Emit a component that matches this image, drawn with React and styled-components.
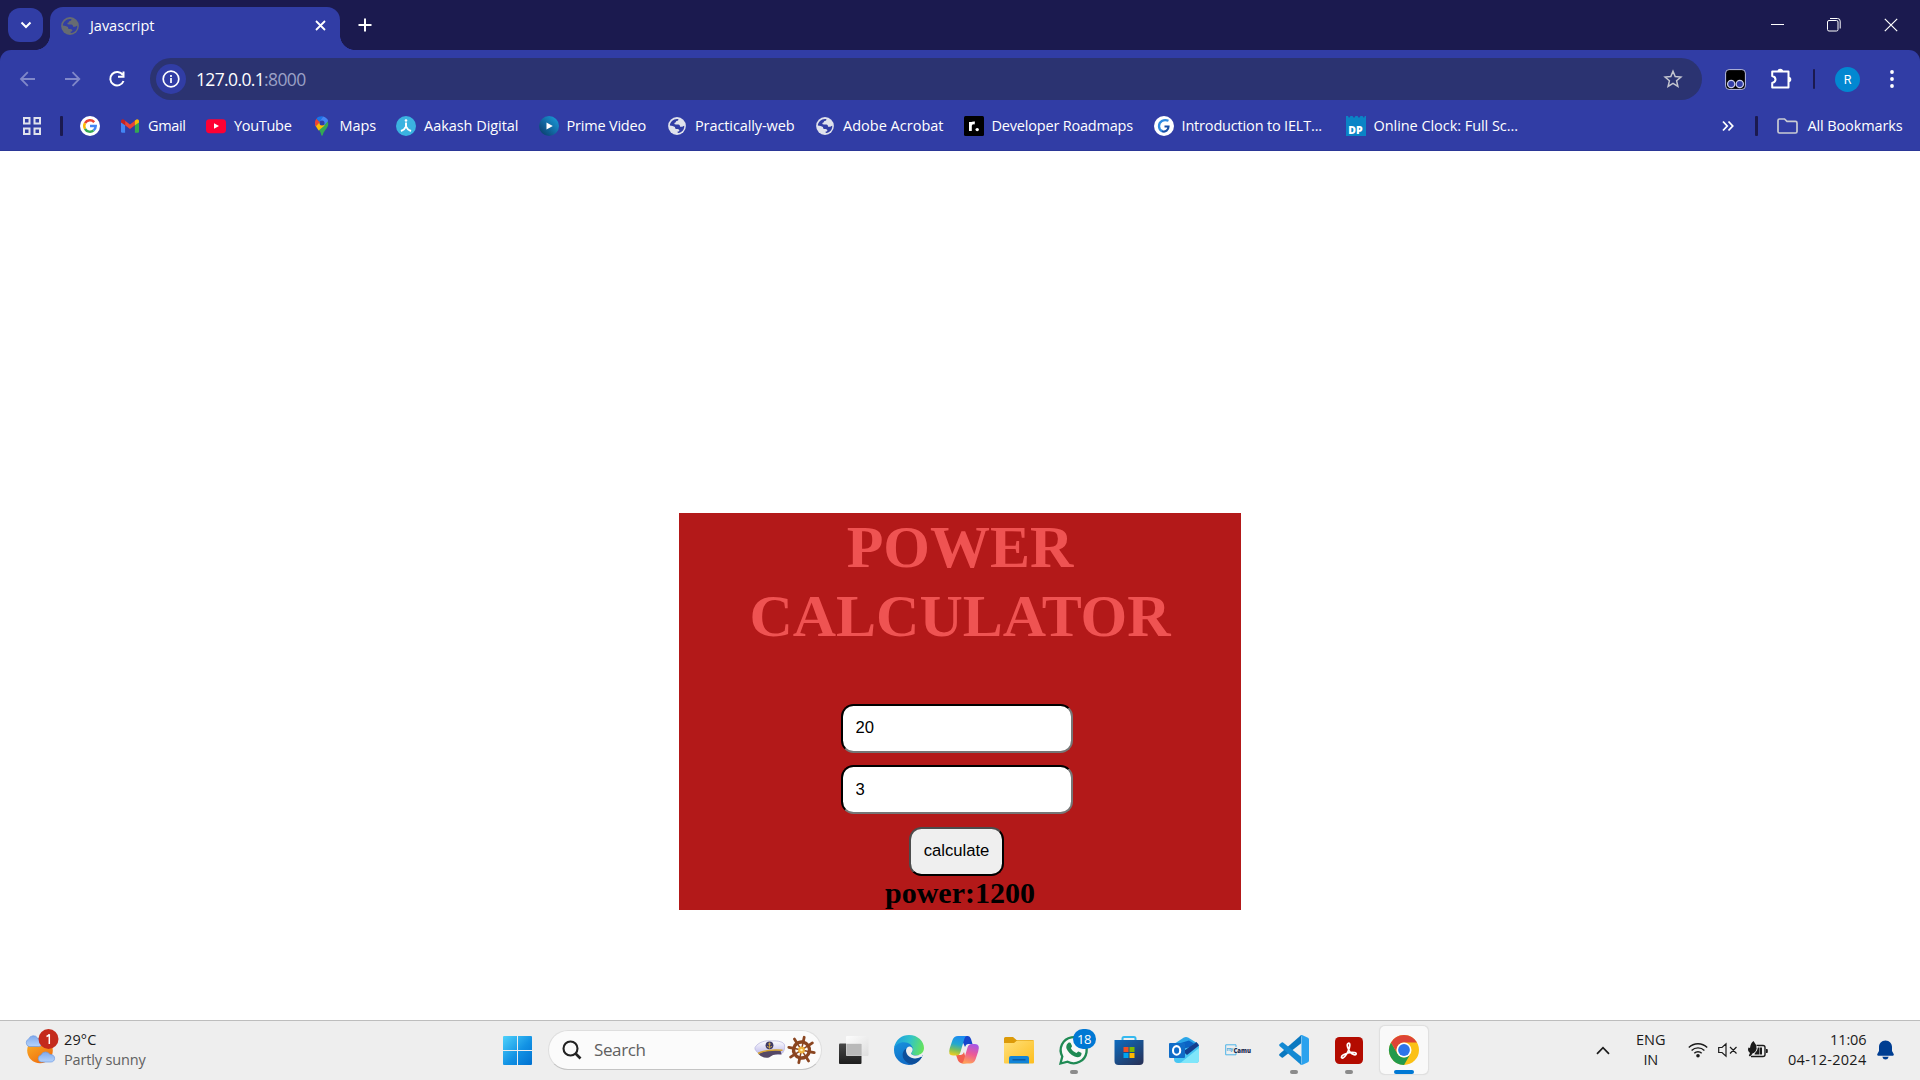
import React, { useLayoutEffect, useRef, useState } from "react";
import styled, { createGlobalStyle } from "styled-components";

const C = { strip: "#1b1a4f", bar: "#313da5", omni: "#2b3371", light: "#e0e2ec" };

const GlobalStyle = createGlobalStyle`
  * { box-sizing: border-box; }
  body { margin: 0; background: #fff; overflow: hidden; }
`;

const Screen = styled.div`
  width: 1920px;
  height: 1080px;
  display: flex;
  flex-direction: column;
  font-family: "Open Sans", "Noto Sans", sans-serif;
  background: #fff;
`;

const Label = styled.span`
  display: block;
  flex: none;
  white-space: nowrap;
  width: ${(p) => p.$w}px;
  font-size: ${(p) => p.$size || 14.5}px;
  line-height: 20px;
  color: ${(p) => p.$color || "#fff"};
`;

/* Spreads the letters so that the label takes exactly w pixels. */
function FitText({ w, children, ...rest }) {
  const ref = useRef(null);
  const [spacing, setSpacing] = useState(0);
  useLayoutEffect(() => {
    const natural = ref.current.getBoundingClientRect().width;
    setSpacing((w + 0.5 - natural) / ref.current.textContent.length);
  }, [w]);
  return (
    <Label $w={w} {...rest}>
      <span ref={ref} style={{ letterSpacing: `${spacing}px` }}>{children}</span>
    </Label>
  );
}

const Svg = styled.svg`
  display: block;
  flex: none;
  overflow: visible;
`;

const Spacer = styled.div`
  flex: 1;
`;

/* ---------- browser chrome ---------- */
const TabStrip = styled.div`
  height: 50px;
  flex: none;
  background: ${C.strip};
  display: flex;
  align-items: flex-start;
  padding-left: 8px;
`;
const TabSearch = styled.div`
  width: 35px;
  height: 34px;
  margin: 8px 7px 0 0;
  border-radius: 12px;
  background: ${C.bar};
  display: grid;
  place-items: center;
`;
const Tab = styled.div`
  position: relative;
  width: 290px;
  height: 43px;
  margin-top: 7px;
  padding: 0 14.5px 6px 11px;
  border-radius: 13px 13px 0 0;
  background: ${C.bar};
  display: flex;
  align-items: center;
  gap: 11px;
  &::before, &::after {
    content: "";
    position: absolute;
    bottom: 0;
    width: 15px;
    height: 15px;
  }
  &::before {
    left: -15px;
    background: radial-gradient(circle at 0 0, transparent 14.6px, ${C.bar} 15.2px);
  }
  &::after {
    right: -15px;
    background: radial-gradient(circle at 100% 0, transparent 14.6px, ${C.bar} 15.2px);
  }
`;
const NewTab = styled.div`
  margin: 18px 0 0 18px;
`;
const WindowControls = styled.div`
  display: flex;
  height: 50px;
  align-items: center;
  gap: 43px;
  padding-right: 22px;
`;
const ToolbarBack = styled.div`
  flex: none;
  height: 101px;
  background: ${C.strip};
`;
const Bars = styled.div`
  height: 101px;
  background: ${C.bar};
  border-radius: 11px 11px 0 0;
  border-bottom: 1px solid #2b3797;
`;
const Toolbar = styled.div`
  height: 58px;
  display: flex;
  align-items: center;
  padding-left: 18px;
`;
const Nav = styled.div`
  display: flex;
  gap: 24.5px;
  width: 132px;
`;
const Omnibox = styled.div`
  width: 1552px;
  height: 42px;
  border-radius: 21px;
  background: ${C.omni};
  display: flex;
  align-items: center;
  padding: 0 19.5px 0 6px;
`;
const InfoDisc = styled.div`
  width: 30px;
  height: 30px;
  border-radius: 50%;
  background: ${C.bar};
  display: grid;
  place-items: center;
  margin-right: 10px;
`;
const Port = styled.span`
  color: #9ba1c6;
`;
const Divider = styled.div`
  flex: none;
  width: ${(p) => p.$w || 2}px;
  height: 20px;
  border-radius: 1px;
  background: ${C.strip};
  margin: 0 ${(p) => p.$r}px 0 ${(p) => p.$l}px;
`;
const Actions = styled.div`
  display: flex;
  align-items: center;
  padding-left: 23px;
`;
const Avatar = styled.div`
  width: 25px;
  height: 25px;
  border-radius: 50%;
  background: #0288d1;
  color: #fff;
  font: 12.5px/25px Roboto, sans-serif;
  text-align: center;
  margin-right: 30px;
`;
const BookmarkBar = styled.div`
  height: 35px;
  display: flex;
  align-items: center;
  padding: 0 18px 0 22px;
`;
const Bookmarks = styled.div`
  display: flex;
  gap: 21px;
`;
const Bookmark = styled.div`
  display: flex;
  align-items: center;
  gap: 8px;
  margin-left: ${(p) => p.$shift || 0}px;
`;

/* ---------- page ---------- */
const Page = styled.main`
  flex: 1;
  display: flex;
  flex-direction: column;
  align-items: center;
  padding-top: 362px;
`;
const Card = styled.section`
  width: 562px;
  height: 397px;
  background: #b31919;
  display: flex;
  flex-direction: column;
  align-items: center;
`;
const Title = styled.h1`
  margin: 0 0 53px;
  width: 500px;
  font: bold 60px/69px "Liberation Serif", serif;
  text-align: center;
  color: #ef5352;
`;
const Field = styled.input`
  display: block;
  width: 232px;
  height: 49px;
  margin: 0 6px 12px 0;
  padding: 0 12.5px ${(p) => (p.$low ? 0 : 1.5)}px;
  border: 2px inset #767676;
  border-color: #212121 #767676 #767676 #212121;
  border-radius: 12.5px;
  background: #fff;
  color: #000;
  outline: none;
  font: 16.67px "Liberation Sans", sans-serif;
`;
const Calculate = styled.button`
  width: 95px;
  height: 49px;
  margin: 1px 7px 0 0;
  padding: 0 0 2px;
  border: 2px solid;
  border-color: #4c4c4c #000 #000 #4c4c4c;
  border-radius: 12.5px;
  background: #efefef;
  color: #000;
  font: 16.67px "Liberation Sans", sans-serif;
`;
const Result = styled.h2`
  margin: 0;
  font: bold 30px/34px "Liberation Serif", serif;
  color: #000;
`;

/* ---------- taskbar ---------- */
const Taskbar = styled.footer`
  height: 60px;
  flex: none;
  background: #eee;
  border-top: 1px solid #bdbdbd;
  display: flex;
  align-items: center;
  padding: 0 26px 1px 24px;
`;
const Weather = styled.div`
  width: 479px;
  display: flex;
  gap: 8px;
  align-items: center;
`;
const Lines = styled.div`
  display: flex;
  flex-direction: column;
  align-items: ${(p) => p.$align || "flex-start"};
`;
const SearchBox = styled.div`
  width: 274px;
  height: 40px;
  margin: 0 4px 0 16px;
  border-radius: 20px;
  background: #fbfbfb;
  border: 1px solid #dedede;
  border-bottom-color: #c4c4c4;
  display: flex;
  align-items: center;
  padding: 0 5px 0 13px;
`;
const Tile = styled.div`
  position: relative;
  width: 55px;
  height: 48px;
  display: grid;
  place-items: center;
`;
const ActiveTile = styled.div`
  width: 48px;
  height: 48px;
  border-radius: 5px;
  background: #f9f9f9;
  box-shadow: 0 0 1px 0.5px #dedede;
  display: grid;
  place-items: center;
`;
const RunMark = styled.div`
  position: absolute;
  bottom: 0;
  left: ${(p) => (p.$on ? 17.5 : 23.5)}px;
  width: ${(p) => (p.$on ? 20 : 8)}px;
  height: 4px;
  border-radius: 2px;
  background: ${(p) => (p.$on ? "#0078d4" : "#8a8a8a")};
`;
const Count = styled.div`
  position: absolute;
  left: 26.5px;
  top: 3px;
  width: 23px;
  height: 20px;
  border-radius: 10px;
  background: #0078d4;
  color: #fff;
  font-size: 13px;
  line-height: 20px;
  letter-spacing: -0.5px;
  text-align: center;
`;
const Tray = styled.div`
  display: flex;
  align-items: center;
`;
const Gap = styled.div`
  flex: none;
  width: ${(p) => p.$w}px;
`;

/* ---------- icons ---------- */
const Globe = ({ color, size = 18 }) => (
  <Svg width={size} height={size} viewBox={size === 20 ? "-1 -1 20 20" : "0 0 18 18"}>
    <circle cx="9" cy="9" r="8.9" fill={color} />
    <path fill={C.bar} d="M1.800 8.400C2.200 4.800 5 2 9 1.900h1.300c.3 1-.2 1.700-1.100 1.900-.9.200-1.300.6-1.300 1.400-.9.200-1.500.5-1.500 1.400 0 .7.500.8 1.200.8h2.700c1.300.2 1.800 1.200 1.700 2.400h1.700c1.100-.1 1.500-1 2.600-1.100.1 3.900-2.400 6.900-6 7.400-.7-.2-.8-.9-.6-1.700h.8c1-.3 1.200-1.500.3-2-.6-.3-1.700-.2-2.600-.3-1.200-.2-1.100-1.200-1.300-2C5.700 9 3.700 8.600 1.800 8.400z" />
  </Svg>
);
const Arrow = ({ flip }) => (
  <Svg width="20" height="20" viewBox="0 0 20 20" fill="none" stroke="#8088c9" strokeWidth="1.8">
    <path d={flip ? "M2 10H16M9.500 3.200L16.300 10L9.500 16.800" : "M17 10H3M9.800 3.200L3 10L9.800 16.800"} />
  </Svg>
);
const GoogleG = () => (
  <Svg width="20" height="20" viewBox="0 0 20 20" fill="none" strokeWidth="2.500">
    <circle cx="10" cy="10" r="10" fill="#fff" />
    <path stroke="#ea4335" d="M14.200 6.200A5.700 5.700 0 0 0 5 7.200" />
    <path stroke="#fbbc05" d="M5 7.200a5.700 5.700 0 0 0 0 5.600" />
    <path stroke="#34a853" d="M5 12.800a5.700 5.700 0 0 0 8.600 1.600" />
    <path stroke="#4285f4" d="M13.600 14.400A5.700 5.700 0 0 0 15.700 10H10" />
  </Svg>
);
const Gmail = () => (
  <Svg width="20" height="20" viewBox="0 0 20 20">
    <path fill="#4285f4" d="M1 5v10.500q0 1.200 1.200 1.200h2.900V8.500z" />
    <path fill="#34a853" d="M19 5v10.500q0 1.200-1.200 1.200h-2.900V8.500z" />
    <path fill="#ea4335" d="M5.100 4.800L10 8.500l4.900-3.700v4.500L10 13 5.100 9.300z" />
    <path fill="#c5221f" d="M1 5.200C1 3.500 3 2.800 4.300 3.900l.8.700v4.700L1 6.400z" />
    <path fill="#fbbc04" d="M19 5.200c0-1.700-2-2.400-3.300-1.300l-.8.700v4.700L19 6.400z" />
  </Svg>
);
const YouTube = () => (
  <Svg width="20" height="20" viewBox="0 0 20 20">
    <rect y="3.200" width="20" height="14" rx="3.400" fill="#ff0033" />
    <path fill="#fff" d="M8 7.200v5.600L13 10z" />
  </Svg>
);
const Maps = () => (
  <Svg width="20" height="20" viewBox="0 0 20 20">
    <path fill="#34a853" d="M9.300 19.500C9 15.500 6.300 13.800 4.500 11L13 3c6 4 2.500 8.500 0 11.500-1.300 1.600-1.800 3-2.300 5z" />
    <path fill="#fbbc04" d="M3.300 9.200L7 5l5.600 4.600-6 5z" />
    <path fill="#ea4335" d="M4.400 2.700L8 6 3.700 10.400C2.400 7.700 2.700 4.700 4.400 2.700z" />
    <path fill="#1a73e8" d="M4.400 2.700C6 .8 8.500 0 11 .5L7.600 6z" />
    <path fill="#4285f4" d="M11 .5c2.300.5 4.300 2.200 5.200 4.400L12 9.500 8 5z" />
    <circle cx="10" cy="6.900" r="2.500" fill={C.bar} />
  </Svg>
);
const Aakash = () => (
  <Svg width="20" height="20" viewBox="0 0 20 20">
    <circle cx="10" cy="10" r="10" fill="#3bb3e0" />
    <circle cx="10" cy="4.500" r="1.300" fill="#fff" />
    <path fill="none" stroke="#fff" strokeWidth="2" d="M10 6.500v4.500M10 10.500Q8.800 13.500 5 15M10 10.500Q11.200 13.500 15 15" />
  </Svg>
);
const Prime = () => (
  <Svg width="20" height="20" viewBox="0 0 20 20">
    <defs>
      <linearGradient id="prime" x1="1" y1="0" x2="0" y2="1">
        <stop offset="0" stopColor="#1aa3e0" />
        <stop offset=".5" stopColor="#126ba5" />
        <stop offset="1" stopColor="#0a3560" />
      </linearGradient>
    </defs>
    <circle cx="10" cy="10" r="10" fill="url(#prime)" />
    <path fill="#fff" d="M7.500 6.500v7l6.300-3.500z" />
  </Svg>
);
const Roadmap = () => (
  <Svg width="20" height="20" viewBox="0 0 20 20">
    <rect width="20" height="20" rx="1.500" fill="#000" />
    <path fill="none" stroke="#fff" strokeWidth="2.800" d="M6.400 15V6M6.400 9.500Q7 6.600 10.800 7" />
    <circle cx="13.200" cy="13.600" r="1.700" fill="#fff" />
  </Svg>
);
const Ielts = () => (
  <Svg width="20" height="20" viewBox="0 0 20 20">
    <circle cx="10" cy="10" r="10" fill="#fff" />
    <path fill="none" stroke="#2f8be0" strokeWidth="2.300" d="M14.500 4.800C9.500 2.800 5 5.800 5 10.200c0 2.500 1.500 4.300 3.500 5" />
    <path fill="none" stroke="#174ea6" strokeWidth="2.200" d="M8 15.200c3.500 1.300 6.500-1 6.500-4.700H10.500" />
  </Svg>
);
const DpText = styled.text`
  font: 800 10.5px "Open Sans", sans-serif;
  fill: #fff;
`;
const Dp = () => (
  <Svg width="20" height="20" viewBox="0 0 20 20">
    <path fill="#0a84c6" d="M0 0h2l1 2 1.500-2h2L8 2l1.500-2h2L13 2l1.500-2h2L18 2l.8-2H20v20H0z" />
    <DpText x="2.200" y="17.600">DP</DpText>
  </Svg>
);

const bookmarks = [
  { icon: <Gmail />, text: "Gmail", w: 37, shift: -1 },
  { icon: <YouTube />, text: "YouTube", w: 57 },
  { icon: <Maps />, text: "Maps", w: 36, shift: -0.5 },
  { icon: <Aakash />, text: "Aakash Digital", w: 94, shift: -0.5 },
  { icon: <Prime />, text: "Prime Video", w: 79, shift: -0.5 },
  { icon: <Globe color={C.light} size={20} />, text: "Practically-web", w: 99, shift: 0.5 },
  { icon: <Globe color={C.light} size={20} />, text: "Adobe Acrobat", w: 100 },
  { icon: <Roadmap />, text: "Developer Roadmaps", w: 141, shift: -0.5 },
  { icon: <Ielts />, text: "Introduction to IELT...", w: 140 },
  { icon: <Dp />, text: "Online Clock: Full Sc...", w: 144, shift: 3 },
];

const WeatherIcon = () => (
  <Svg width="32" height="36" viewBox="0 0 32 36">
    <defs>
      <linearGradient id="sun" x1="0" y1="0" x2=".6" y2="1">
        <stop offset="0" stopColor="#fbb829" />
        <stop offset="1" stopColor="#f07010" />
      </linearGradient>
      <linearGradient id="cloud" x1="0" y1="0" x2="0" y2="1">
        <stop offset="0" stopColor="#7fa9ec" />
        <stop offset="1" stopColor="#b5d3fb" />
      </linearGradient>
    </defs>
    <circle cx="16" cy="18.500" r="12.800" fill="url(#sun)" />
    <path fill="url(#cloud)" stroke="#6f9be3" strokeWidth=".7" d="M5 14.500a4 4 0 0 1-.3-7.500 5 5 0 0 1 9-.8c3 0 4.500 2 4.500 4.500s-1.600 3.800-3.500 3.800z" />
    <path fill="url(#cloud)" stroke="#6f9be3" strokeWidth=".7" d="M17 30a3.600 3.600 0 0 1 0-7 5 5 0 0 1 9-.5c2.800-.2 4.600 1.500 4.600 3.800S29 30 27 30z" />
    <circle cx="24.500" cy="7" r="10" fill="#c42b1c" />
    <path d="M22.500 4.500q2-.7 2.800-2.200V12" fill="none" stroke="#fff" strokeWidth="1.500" />
  </Svg>
);
const StartIcon = () => (
  <Svg width="29" height="29" viewBox="0 0 29 29">
    <defs>
      <linearGradient id="win" gradientUnits="userSpaceOnUse" x1="0" y1="0" x2="29" y2="29">
        <stop offset="0" stopColor="#4fd2fb" />
        <stop offset=".55" stopColor="#1292e4" />
        <stop offset="1" stopColor="#0070d0" />
      </linearGradient>
    </defs>
    <path fill="url(#win)" d="M1 0h13v14H0V1q0-1 1-1zM15 0h13q1 0 1 1v13H15zM0 15h14v14H1q-1 0-1-1zM15 15h14v13q0 1-1 1H15z" />
  </Svg>
);
const HatWheel = () => (
  <Svg width="62" height="30" viewBox="0 0 62 30">
    <defs>
      <linearGradient id="hat" x1="0" y1="0" x2="0" y2="1">
        <stop offset="0" stopColor="#fff" />
        <stop offset="1" stopColor="#b9b4ea" />
      </linearGradient>
    </defs>
    <path fill="url(#hat)" stroke="#b5b2dc" strokeWidth=".7" d="M1 12.500C4 7 12 5 18 6c6-.5 12 1 12.500 4S30 18 27 19L7 20Q0 15.500 1 12.500z" />
    <path fill="#544866" d="M4.500 19q8-5 22-3.500l1 4Q20 18 15 22.500 8 23.500 4.500 19z" />
    <path fill="none" stroke="#d6a32e" strokeWidth="1.600" d="M4 18.500Q12 14 28.500 15.200" />
    <circle cx="15.500" cy="10.300" r="3.900" fill="#3f3a66" />
    <path fill="none" stroke="#e3b341" strokeWidth=".8" d="M15.500 7.500v6M14 9h3M13 11.300q2.500 2.700 5 0" />
    <g fill="none" stroke="#8a4520" transform="rotate(12 47.500 15)">
      <circle cx="47.500" cy="15" r="8" strokeWidth="3.400" />
      <path strokeWidth="2.800" strokeLinecap="round" d="M47.500 2v4M47.500 24v4M34.500 15h4M56.500 15h4M38.300 5.800l2.800 2.800M53.900 21.400l2.800 2.800M38.300 24.200l2.800-2.800M53.900 8.600l2.800-2.800" />
      <path strokeWidth="1.500" d="M47.500 8v14M40.500 15h14M42.500 10l10 10M42.500 20l10-10" />
    </g>
    <circle cx="47.500" cy="15" r="3.400" fill="#eeb13d" />
    <circle cx="47.500" cy="15" r="1.300" fill="#fff0b0" />
  </Svg>
);
const TaskView = () => (
  <Svg width="30" height="28" viewBox="0 0 30 28">
    <defs>
      <linearGradient id="tv" x1="0" y1="0" x2="0" y2="1">
        <stop offset="0" stopColor="#484848" />
        <stop offset="1" stopColor="#1d1d1d" />
      </linearGradient>
      <linearGradient id="tvf" x1="0" y1="0" x2="1" y2="1">
        <stop offset="0" stopColor="#fff" stopOpacity=".85" />
        <stop offset="1" stopColor="#dcdcdc" stopOpacity=".9" />
      </linearGradient>
    </defs>
    <rect y="7.500" width="22.500" height="20.500" rx="1" fill="url(#tv)" />
    <rect x="7" y="0" width="22.500" height="20" rx="1" fill="url(#tvf)" />
    <path fill="#b9b9b9" d="M7.500 8H22.500V19.500H7.500z" />
  </Svg>
);
const Edge = () => (
  <Svg width="30" height="30" viewBox="0 0 30 30">
    <defs>
      <linearGradient id="e1" x1="0" y1=".3" x2="1" y2=".5">
        <stop offset="0" stopColor="#1b9de2" />
        <stop offset=".5" stopColor="#31c3c9" />
        <stop offset="1" stopColor="#66e35c" />
      </linearGradient>
      <linearGradient id="e2" x1="0" y1="0" x2=".5" y2="1">
        <stop offset="0" stopColor="#1795df" />
        <stop offset="1" stopColor="#1068c4" />
      </linearGradient>
    </defs>
    <path fill="url(#e2)" d="M0 15C0 8 5 4 15 6L22 16 21 20 29 20C26 26 21 30 15 30A15 15 0 0 1 0 15z" />
    <path fill="url(#e1)" d="M.2 12.800C1.500 4.500 8 0 15 0c9 0 15 6.500 15 13 0 4.500-3.500 7.300-7.600 7.300-3.200 0-5-1-5-2.100 0-.9 1.500-1.500 1.500-4C18.900 10.500 15 7.200 9.800 7.200 5.400 7.200 2 9.500.2 12.800z" />
    <path fill="#0d4f9b" d="M12.300 13.500c-3.800 2.200-4.800 7-2.200 11 2.300 3.500 6.300 5.300 8.900 4.800 3.700-1 7-3.500 8.800-7 .3-.6-.3-.8-.8-.5-2 1.100-4 1.600-6 1.600-5 0-8.700-4.800-8.700-9.900z" />
    <path fill="#eee" d="M12 15.500c.3-3.500 3.600-4.900 5.500-3.300 1.500 1.300 1.500 3.300.4 4.800-.8 1-1 1.500-.4 2.200 1.500 1.500 5.500 2 8.900.4 1-.4 2-1 2.600-1.600L28.200 22 27 21.800c-2 1.100-4 1.600-6 1.600-5 0-8.900-3.500-9-7.900z" />
  </Svg>
);
const Copilot = () => (
  <Svg width="30" height="28" viewBox="0 0 30 28">
    <defs>
      <linearGradient id="c1" x1=".4" y1="0" x2=".2" y2="1">
        <stop offset="0" stopColor="#1b8cf0" />
        <stop offset=".4" stopColor="#23a8cf" />
        <stop offset=".7" stopColor="#7cbf5a" />
        <stop offset="1" stopColor="#f7cf1b" />
      </linearGradient>
      <linearGradient id="c2" x1=".7" y1="0" x2=".4" y2="1">
        <stop offset="0" stopColor="#a557e8" />
        <stop offset=".5" stopColor="#ec5a97" />
        <stop offset="1" stopColor="#ffa057" />
      </linearGradient>
    </defs>
    <path fill="#1646cc" d="M11 0h8q2 0 3 3l1.500 5H19q-2 0-3 3z" />
    <path fill="#f2604d" d="M7 19h5q2 0 3-3l3 11q-7 1.500-9-2.500z" />
    <path fill="url(#c1)" d="M9 0h9q-2 0-3 4l-3.500 12q-1 3.500-4 3.500H4Q-1.500 19.500.8 12L3.500 4Q5 0 9 0z" />
    <path fill="url(#c2)" d="M21 27.500h-9q2 0 3-4l3.500-12Q19.500 8 22.500 8H26q5.500 0 3.200 7.500L26.500 23.500Q25 27.500 21 27.500z" />
  </Svg>
);
const Folder = () => (
  <Svg width="30" height="27" viewBox="0 0 30 27">
    <defs>
      <linearGradient id="fo" x1="0" y1="0" x2="1" y2="1">
        <stop offset="0" stopColor="#ffe07a" />
        <stop offset="1" stopColor="#fdbe1e" />
      </linearGradient>
    </defs>
    <path fill="#dc9a08" d="M0 1.500Q0 0 1.500 0H9l3.500 3H28.500Q30 3 30 4.500V10H0z" />
    <path fill="url(#fo)" d="M0 6h10l3-2.500H30V25.500q0 1-1 1H1q-1 0-1-1z" />
    <path fill="#1184d8" d="M5 26.500V21q0-2 2-2H23q2 0 2 2v5.500z" />
    <path stroke="#0a5295" strokeWidth="1.200" d="M8.500 22.800h13" />
  </Svg>
);
const WhatsApp = () => (
  <Svg width="30" height="30" viewBox="0 0 30 30">
    <path fill="#f8f8f8" stroke="#1f8a54" strokeWidth="2.300" d="M1.500 28.500L3.300 21.500A13 13 0 1 1 8.600 26.700z" />
    <path fill="#1f8a54" d="M10 7.500c.8-.3 1.500 0 1.800.7l1.200 2.700c.2.700-1 1.700-1.200 2.200.8 2 3.300 4.100 5.500 5 .7-.3 1.500-1.900 2.200-1.700l2.700 1.400c.7.400.3 2.700-1 3.600-1.500 1-3.300 1-5.600 0-4-1.600-7-5-8-7.700-.9-2.700.6-5.500 2.400-6.200z" />
  </Svg>
);
const Store = () => (
  <Svg width="30" height="30" viewBox="0 0 30 30">
    <defs>
      <linearGradient id="st" x1="0" y1="0" x2=".8" y2="1">
        <stop offset="0" stopColor="#0d6cc0" />
        <stop offset="1" stopColor="#26345c" />
      </linearGradient>
    </defs>
    <path fill="none" stroke="#35b9ef" strokeWidth="2" d="M8.500 6V3.500q0-1.500 1.500-1.500H20q1.500 0 1.500 1.500V6" />
    <path fill="url(#st)" d="M.5 5h29V26q0 4-4 4h-21q-4 0-4-4z" />
    <path fill="#f25022" d="M9.500 12h5v5h-5z" />
    <path fill="#7fba00" d="M15.500 12h5v5h-5z" />
    <path fill="#00a4ef" d="M9.500 18h5v5h-5z" />
    <path fill="#ffb900" d="M15.500 18h5v5h-5z" />
  </Svg>
);
const Outlook = () => (
  <Svg width="30" height="26" viewBox="0 0 30 26">
    <path fill="#2ba6e8" d="M5 7L14.500.8q2.500-1.500 5 0L29.500 7V14H5z" />
    <path fill="#0a62c4" d="M5 8L20 3.500l5 3-9 8z" />
    <path fill="#47c6f2" d="M5 14L30 8V22.500q0 3.500-3.500 3.500H9q-4 0-4-4z" />
    <path fill="#123f8f" d="M14 14.500L27.500 5 30 8.500 18 18z" />
    <path fill="#7fe6fa" d="M12 25.500L30 11V22.500q0 3.500-3.500 3.500H10z" />
    <rect y="6" width="16" height="15" rx="1" fill="#0f6cc8" />
    <ellipse cx="7.600" cy="13.400" rx="3.600" ry="4.300" fill="none" stroke="#fff" strokeWidth="2.100" />
  </Svg>
);
const CamuText = styled.text`
  font: ${(p) => (p.$bold ? "800 7.2px" : "600 5px")} "Open Sans", sans-serif;
  fill: ${(p) => (p.$bold ? "#1c2c50" : "#2c9bd6")};
`;
const Camu = () => (
  <Svg width="27" height="12" viewBox="0 0 27 12">
    <path fill="none" stroke="#4db4e8" strokeWidth="1" d="M11 3V.8H.7v10H11V9" />
    <CamuText x="1.600" y="7.300" textLength="6.500">my</CamuText>
    <CamuText $bold x="8.500" y="8.500" textLength="17.500" lengthAdjust="spacingAndGlyphs">Camu</CamuText>
  </Svg>
);
const VsCode = () => (
  <Svg width="30" height="30" viewBox="0 0 30 30">
    <path fill="#0a78c0" d="M22.200 0v8.200L4 22.600q-.7.500-1.300 0L.5 20.700q-.8-.8 0-1.600z" />
    <path fill="#1389d3" d="M22.200 30v-8.200L4 7.400q-.7-.5-1.300 0L.5 9.300q-.8.8 0 1.600z" />
    <path fill="#2ba2ee" d="M22.200.1Q23 0 23.600.3L29 2.800q1 .5 1 1.600V25.600q0 1.100-1 1.600L23.600 29.700Q22 30.200 21.500 29.200 22.500 29 22.500 28V2Q22.500 1 21.500.7z" />
  </Svg>
);
const Acrobat = () => (
  <Svg width="28" height="27" viewBox="0 0 28 27">
    <rect width="28" height="27" rx="4.500" fill="#b30b00" />
    <path fill="none" stroke="#fff" strokeWidth="1.700" d="M13 6.500c2-1.200 2.200 1.500 1.300 4.500C13.300 14.500 10.500 20 8 21c-2.200.5-2-1.800.5-3.200 3-1.800 8-2.800 11-2.300 2.600.5 2 2.800-.5 2.200C16 17 13.500 13 12.600 10c-.5-1.700-.5-3 .4-3.500z" />
  </Svg>
);
const ChromeIcon = () => (
  <Svg width="30" height="30" viewBox="0 0 30 30">
    <circle cx="15" cy="15" r="15" fill="#fbc116" />
    <path fill="#239a4b" d="M2 7.500L8.500 18.750A7.500 7.500 0 0 0 21.500 18.750L15 30A15 15 0 0 1 2 7.500z" />
    <path fill="#dd4436" d="M2 7.500a15 15 0 0 1 26 0H15A7.500 7.500 0 0 0 8.500 18.750z" />
    <circle cx="15" cy="15" r="7.500" fill="#fff" />
    <circle cx="15" cy="15" r="5.900" fill="#2d74e8" />
  </Svg>
);

const apps = [
  { icon: <TaskView /> },
  { icon: <Edge /> },
  { icon: <Copilot /> },
  { icon: <Folder /> },
  { icon: <WhatsApp />, run: true, count: "18" },
  { icon: <Store /> },
  { icon: <Outlook /> },
  { icon: <Camu /> },
  { icon: <VsCode />, run: true },
  { icon: <Acrobat />, run: true },
];

export default function App() {
  return (
    <Screen>
      <GlobalStyle />
      <TabStrip>
        <TabSearch>
          <Svg width="12" height="8" viewBox="0 0 12 8" fill="none" stroke="#fff" strokeWidth="2">
            <path d="M1.500 1.500L6 6l4.500-4.500" />
          </Svg>
        </TabSearch>
        <Tab>
          <Globe color="#666b72" />
          <FitText w={64}>Javascript</FitText>
          <Spacer />
          <Svg width="11" height="11" viewBox="0 0 11 11" stroke="#fff" strokeWidth="1.800">
            <path d="M1 1l9 9M10 1l-9 9" />
          </Svg>
        </Tab>
        <NewTab>
          <Svg width="14" height="14" viewBox="0 0 14 14" stroke="#fff" strokeWidth="2">
            <path d="M7 .5v13M.5 7h13" />
          </Svg>
        </NewTab>
        <Spacer />
        <WindowControls>
          <Svg width="13" height="14" viewBox="0 0 13 14">
            <path d="M0 6.500h13" stroke="#fff" />
          </Svg>
          <Svg width="14" height="14" viewBox="0 0 14 14" fill="none" stroke="#fff">
            <rect x=".5" y="2.500" width="10.500" height="10.500" rx="1.500" />
            <path d="M3 .5H10.500Q13.200.5 13.200 3.200V10.500" />
          </Svg>
          <Svg width="14" height="14" viewBox="0 0 14 14" stroke="#fff" strokeWidth="1.200">
            <path d="M.8.8l12.400 12.400M13.200.8L.8 13.200" />
          </Svg>
        </WindowControls>
      </TabStrip>

      <ToolbarBack>
        <Bars>
          <Toolbar>
            <Nav>
              <Arrow />
              <Arrow flip />
              <Svg width="20" height="20" viewBox="0 0 20 20" fill="none" stroke="#fff" strokeWidth="2">
                <path d="M15.800 6A6.800 6.800 0 1 0 16.500 12M16.500 2.500V7.700H11" />
              </Svg>
            </Nav>
            <Omnibox>
              <InfoDisc>
                <Svg width="18" height="18" viewBox="0 0 18 18">
                  <circle cx="9" cy="9" r="7.800" fill="none" stroke="#fff" strokeWidth="1.700" />
                  <path d="M9 8v5M9 4.900v2" stroke="#fff" strokeWidth="1.700" />
                </Svg>
              </InfoDisc>
              <FitText w={109} $size={17.5}>127.0.0.1<Port>:8000</Port></FitText>
              <Spacer />
              <Svg width="20" height="20" viewBox="0 0 20 20" fill="none" stroke="#c3c5cf" strokeWidth="1.500">
                <path d="M10 2.300l2.200 5.300 5.700.5-4.300 3.700 1.300 5.600L10 14.400l-4.900 3 1.300-5.600L2.100 8.100l5.700-.5z" />
              </Svg>
            </Omnibox>
            <Actions>
              <Svg width="21" height="21" viewBox="0 0 21 21" stroke="#b9bde3">
                <rect x=".6" y=".6" width="19.800" height="19.800" rx="3.500" fill="#000" />
                <circle cx="6.200" cy="15" r="3.600" fill={C.bar} stroke="#c9ccea" strokeWidth="1.300" />
                <circle cx="14.800" cy="15" r="3.600" fill={C.bar} stroke="#c9ccea" strokeWidth="1.300" />
              </Svg>
              <Gap $w={25} />
              <Svg width="21" height="21" viewBox="0 0 21 21">
                <path fill="none" stroke="#fff" strokeWidth="2" strokeLinejoin="round" d="M1.200 2.500H17.500V18.500H1.200V14Q4.500 13.200 4.500 10.500T1.200 7z" />
                <path fill="#fff" d="M6.500 2.500a2.800 2.800 0 0 1 5.600 0zM17.500 7.700a2.800 2.800 0 0 1 0 5.600z" />
              </Svg>
              <Divider $l={21} $r={20} />
              <Avatar>R</Avatar>
              <Svg width="4" height="20" viewBox="0 0 4 20" fill="#fff">
                <circle cx="2" cy="3" r="1.900" />
                <circle cx="2" cy="10" r="1.900" />
                <circle cx="2" cy="17" r="1.900" />
              </Svg>
            </Actions>
          </Toolbar>

          <BookmarkBar>
            <Svg width="20" height="20" viewBox="0 0 20 20" fill="none" stroke={C.light} strokeWidth="2">
              <path d="M2 2h5.500v5.500H2zM12.500 2H18v5.500h-5.500zM2 12.500h5.500V18H2zM12.500 12.500H18V18h-5.500z" />
            </Svg>
            <Divider $l={18} $r={17} $w={3} />
            <Bookmarks>
              <GoogleG />
              {bookmarks.map((b) => (
                <Bookmark key={b.text} $shift={b.shift}>
                  {b.icon}
                  <FitText w={b.w}>{b.text}</FitText>
                </Bookmark>
              ))}
            </Bookmarks>
            <Spacer />
            <Svg width="12" height="12" viewBox="0 0 12 12" fill="none" stroke="#fff" strokeWidth="1.800">
              <path d="M1 1.500L5.200 6 1 10.500M6.500 1.500L10.700 6 6.500 10.500" />
            </Svg>
            <Divider $l={21} $r={19} $w={3} />
            <Svg width="21" height="16" viewBox="0 0 21 16" fill="none" stroke="#c9cbd3" strokeWidth="1.700">
              <path d="M1 13.500V2.500Q1 1 2.500 1H7.500L10 3.400h8.500Q20 3.400 20 5v8.500q0 1.500-1.500 1.500h-16Q1 15 1 13.500z" />
            </Svg>
            <Gap $w={9.5} />
            <FitText w={94.5}>All Bookmarks</FitText>
          </BookmarkBar>
        </Bars>
      </ToolbarBack>

      <Page>
        <Card>
          <Title>POWER CALCULATOR</Title>
          <Field defaultValue="20" />
          <Field defaultValue="3" $low />
          <Calculate>calculate</Calculate>
          <Result>power:1200</Result>
        </Card>
      </Page>

      <Taskbar>
        <Weather>
          <WeatherIcon />
          <Lines>
            <FitText w={32} $color="#1b1b1b">29°C</FitText>
            <FitText w={81} $color="#616161">Partly sunny</FitText>
          </Lines>
        </Weather>
        <StartIcon />
        <SearchBox>
          <Svg width="20" height="20" viewBox="0 0 20 20" fill="none" stroke="#222" strokeWidth="2.100">
            <circle cx="8.500" cy="8.500" r="7" />
            <path strokeWidth="2.600" d="M13.500 13.500l5 5" />
          </Svg>
          <Gap $w={12} />
          <FitText w={51} $size={17} $color="#606060">Search</FitText>
          <Spacer />
          <HatWheel />
        </SearchBox>
        {apps.map((a, i) => (
          <Tile key={i}>
            {a.icon}
            {a.count && <Count>{a.count}</Count>}
            {a.run && <RunMark />}
          </Tile>
        ))}
        <Tile>
          <ActiveTile>
            <ChromeIcon />
          </ActiveTile>
          <RunMark $on />
        </Tile>
        <Spacer />
        <Tray>
          <Svg width="14" height="9" viewBox="0 0 14 9" fill="none" stroke="#1b1b1b" strokeWidth="1.700">
            <path d="M1 7.800L7 1.600l6 6.200" />
          </Svg>
          <Gap $w={26} />
          <Lines $align="center">
            <FitText w={29} $color="#1b1b1b">ENG</FitText>
            <FitText w={14} $color="#1b1b1b">IN</FitText>
          </Lines>
          <Gap $w={23} />
          <Svg width="20" height="16" viewBox="0 0 20 16" fill="none" stroke="#1b1b1b" strokeWidth="1.400">
            <path d="M.8 5.600a13 13 0 0 1 18.400 0M3.600 8.500a9 9 0 0 1 12.800 0M6.300 11.300a5.200 5.200 0 0 1 7.400 0" />
            <circle cx="10" cy="13.800" r="1.800" fill="#1b1b1b" stroke="none" />
          </Svg>
          <Gap $w={10} />
          <Svg width="20" height="14" viewBox="0 0 20 14" fill="none" stroke="#1b1b1b" strokeWidth="1.200">
            <path d="M.7 4.500H4L8 .8V13.200L4 9.500H.7zM12 4l6.500 6.500M18.500 4L12 10.500" />
          </Svg>
          <Gap $w={10} />
          <Svg width="20" height="18" viewBox="0 0 20 18">
            <path fill="none" stroke="#1b1b1b" strokeWidth="1.400" d="M8.500 4.500H15q2 0 2 2v7q0 2-2 2H3" />
            <path fill="#1b1b1b" d="M18 8h1.500q.8 2 0 4H18zM9 6.500h2.500v7H6.500zM12 6.500h2v7h-2z" />
            <path fill="#1b1b1b" d="M5.500 0Q9 4 8.800 8q-.3 4-4.300 4.800L2 15.500.8 14.500 2 12Q-1 9.500.5 6.500L2 7Q2.500 2 5.500 0z" />
            <path stroke="#eee" strokeWidth="1" d="M9.500 5Q9.500 11 4 13.500" fill="none" />
          </Svg>
          <Gap $w={20} />
          <Lines $align="flex-end">
            <FitText w={36} $color="#1b1b1b">11:06</FitText>
            <FitText w={78} $color="#1b1b1b">04-12-2024</FitText>
          </Lines>
          <Gap $w={11} />
          <Svg width="17" height="20" viewBox="0 0 17 20" fill="#003e92">
            <path d="M8.500.5c4 0 6.500 3 6.500 6.500v4l1.800 3.300q.3 1.400-1 1.400H1.200q-1.300 0-1-1.400L2 11V7C2 3.500 4.500.5 8.500.5zM5.300 16.700h6.400Q11 19.500 8.500 19.500T5.300 16.700z" />
          </Svg>
        </Tray>
      </Taskbar>
    </Screen>
  );
}
